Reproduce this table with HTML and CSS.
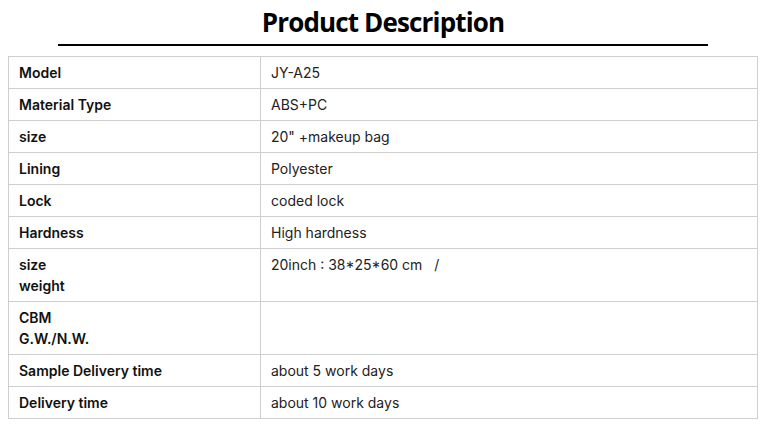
FILE: index.html
```html
<!DOCTYPE html>
<html>
<head>
<meta charset="utf-8">
<link rel="stylesheet" href="styles.css">
</head>
<body>
<div class="page">
  <h1 class="title">Product Description</h1>
  <div class="rule"></div>
  <table class="spec">
    <tr><th>Model</th><td>JY-A25</td></tr>
    <tr><th>Material Type</th><td>ABS+PC</td></tr>
    <tr><th>size</th><td>20" +makeup bag</td></tr>
    <tr><th>Lining</th><td>Polyester</td></tr>
    <tr><th>Lock</th><td>coded lock</td></tr>
    <tr><th>Hardness</th><td>High hardness</td></tr>
    <tr><th>size<br>weight</th><td>20inch : 38*25*60 cm &nbsp; /</td></tr>
    <tr><th>CBM<br>G.W./N.W.</th><td></td></tr>
    <tr><th>Sample Delivery time</th><td>about 5 work days</td></tr>
    <tr><th>Delivery time</th><td>about 10 work days</td></tr>
  </table>
</div>
</body>
</html>
```
FILE: styles.css
```css
html, body {
  margin: 0;
  padding: 0;
  background: #fff;
}
.page {
  padding: 0 26px 0 8px;
}
.title {
  margin: 0;
  padding-top: 6px;
  height: 33px;
  font-family: "Open Sans", sans-serif;
  font-weight: 700;
  font-size: 26px;
  line-height: 33px;
  text-align: center;
  color: #000;
  letter-spacing: -0.85px;
}
.rule {
  width: 650px;
  height: 2px;
  background: #000;
  margin: 5px 0 0 50px;
}
.spec {
  margin-top: 10px;
  width: 750px;
  border-collapse: collapse;
  font-family: Inter, "Liberation Sans", sans-serif;
  font-size: 14px;
  line-height: 21px;
  color: #222;
}
.spec th, .spec td {
  border: 1px solid #cfcfcf;
  padding: 5px 10px;
  text-align: left;
  vertical-align: top;
}
.spec th {
  width: 231px;
  font-weight: 600;
  color: #111;
}
.spec td {
  font-weight: 400;
}
```
